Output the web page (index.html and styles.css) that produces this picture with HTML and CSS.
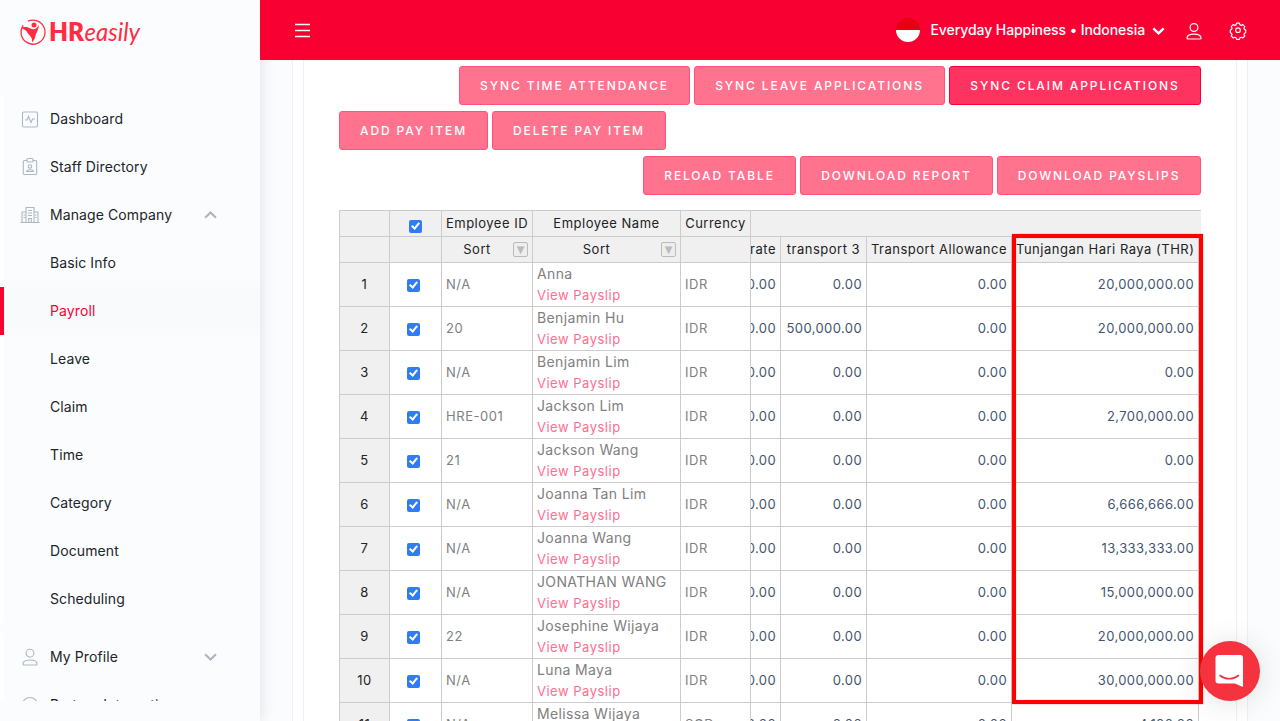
FILE: index.html
```html
<!DOCTYPE html>
<html lang="en">
<head>
<meta charset="utf-8">
<title>HReasily – Payroll</title>
<link rel="stylesheet" href="styles.css">
</head>
<body>
<div class="app">
  <aside class="sidebar">
    <div class="brand">
      <svg width="124" height="34" viewBox="0 0 124 34">
        <path d="M8 5.200A12 12 0 0 1 16.500 4.700A12 12 0 1 1 3.200 9.300" fill="none" stroke="#ff2d42" stroke-width="1.300"/>
        <circle cx="14" cy="9" r="2.500" fill="#ff2d42"/>
        <path d="M.8 12.500c3.500-2.500 7-1.500 9.700 0 3.500 1.500 6 .5 8.500-3.500-.3 4.500-2 6.500-3 9-1 2.500-.5 5-4 8.500.4-4-.4-5-2.700-7.500C7 16.500 5.500 12.500.8 12.500z" fill="#ff2d42"/>
        <text class="logo-bold" x="29" y="25" textLength="35" lengthAdjust="spacingAndGlyphs">HR</text>
        <text class="logo-light" x="64.500" y="25" textLength="55.500" lengthAdjust="spacingAndGlyphs">easily</text>
      </svg>
    </div>
    <nav class="menu">
      <a class="item"><svg class="icon" viewBox="0 0 20 20"><rect x="2.500" y="3" width="15" height="15" rx="1.500"/><path d="M5 11h2L8.500 7.500l2.500 6 1.700-3.500H15"/></svg><span>Dashboard</span></a>
      <a class="item"><svg class="icon" viewBox="0 0 20 20"><path d="M7 3.500H4.500a1.200 1.200 0 0 0-1.200 1.200v11.600a1.200 1.200 0 0 0 1.200 1.200h11a1.200 1.200 0 0 0 1.200-1.200V4.700a1.200 1.200 0 0 0-1.200-1.200H13M7 3a1 1 0 0 1 1-1.500h4A1 1 0 0 1 13 3v1a1 1 0 0 1-1 1H8a1 1 0 0 1-1-1z"/><circle cx="10" cy="9.500" r="1.700"/><path d="M6.500 14.500c.5-2.300 6.500-2.300 7 0z"/></svg><span>Staff Directory</span></a>
      <a class="item"><svg class="icon" viewBox="0 0 20 20"><path d="M.5 17.500h19M6 17V2.500h8V17M6 7H2v10M14 7h4v10M8 5.500h4M8 8h4M8 10.500h4M3.500 10H5M3.500 12.500H5M15 10h1.500M15 12.500h1.500M8.700 17v-3.500h2.600V17"/></svg><span class="grow">Manage Company</span><svg class="caret" viewBox="0 0 12 12"><path d="M1 8 6 3.200 11 8"/></svg></a>
      <a class="item"><span>Basic Info</span></a>
      <a class="item active"><span>Payroll</span></a>
      <a class="item"><span>Leave</span></a>
      <a class="item"><span>Claim</span></a>
      <a class="item"><span>Time</span></a>
      <a class="item"><span>Category</span></a>
      <a class="item"><span>Document</span></a>
      <a class="item"><span>Scheduling</span></a>
      <a class="item group"><svg class="icon" viewBox="0 0 20 20"><circle cx="10" cy="6.200" r="3.900"/><path d="M3 17c0-5.300 14-5.300 14 0 0 .6-.4 1-1 1H4c-.6 0-1-.4-1-1z"/></svg><span class="grow">My Profile</span><svg class="caret" viewBox="0 0 12 12"><path d="M1 3 6 7.800 11 3"/></svg></a>
      <a class="item"><svg class="icon" viewBox="0 0 20 20"><circle cx="10" cy="10" r="7.500"/></svg><span>Partner Integration</span></a>
    </nav>
  </aside>
  <div class="page">
    <header class="topbar">
      <svg class="burger" viewBox="0 0 17 17"><path d="M1 2.500h15M1 8.500h15M1 14.500h15"/></svg>
      <div class="account">
        <span class="flag"></span>
        <span class="company">Everyday Happiness • Indonesia</span>
        <svg class="chevron" viewBox="0 0 12 12"><path d="M1.200 4 6 8.700 10.800 4"/></svg>
      </div>
      <svg class="top-icon" viewBox="0 0 20 20"><circle cx="10" cy="7.500" r="3.900"/><path d="M3 18c0-5.300 14-5.300 14 0 0 .6-.4 1-1 1H4c-.6 0-1-.4-1-1z"/></svg>
      <svg class="top-icon" viewBox="0 0 20 20"><circle cx="10" cy="10.200" r="2.300"/><path d="M8.600 3.200h2.800l.6 1.700 1.200.5 1.600-.8 2 2-.8 1.600.5 1.200 1.200.6v2.600l-1.200.8-.5 1.200.8 1.400-2 2-1.600-.7-1.200.5-.6 1.600H8.600L8 17.800l-1.200-.5-1.600.7-2-2 .8-1.400-.5-1.200-1.200-.8V10l1.200-.6.5-1.200-.8-1.600 2-2 1.600.8L8 4.900z" stroke-linejoin="round"/></svg>
    </header>
    <main class="outer">
      <section class="card">
        <div class="actions end">
          <button class="btn w231">SYNC TIME ATTENDANCE</button>
          <button class="btn w251">SYNC LEAVE APPLICATIONS</button>
          <button class="btn w252 strong">SYNC CLAIM APPLICATIONS</button>
        </div>
        <div class="actions">
          <button class="btn w149">ADD PAY ITEM</button>
          <button class="btn w174">DELETE PAY ITEM</button>
        </div>
        <div class="actions end">
          <button class="btn w153">RELOAD TABLE</button>
          <button class="btn w193">DOWNLOAD REPORT</button>
          <button class="btn w204">DOWNLOAD PAYSLIPS</button>
        </div>
        <div class="sheet">
          <div class="row head first"><i></i><i class="check"><b class="box"></b></i><i>Employee ID</i><i>Employee Name</i><i>Currency</i><i class="span"></i></div>
          <div class="row head"><i></i><i></i><i class="sort">Sort<u>▼</u></i><i class="sort">Sort<u>▼</u></i><i></i><i class="cut">rate</i><i>transport 3</i><i>Transport Allowance</i><i class="thr">Tunjangan Hari Raya (THR)</i></div>
          <div class="row"><i class="no">1</i><i class="check"><b class="box"></b></i><i>N/A</i><i class="name">Anna<a>View Payslip</a></i><i>IDR</i><i class="num cut">0.00</i><i class="num">0.00</i><i class="num">0.00</i><i class="num">20,000,000.00</i></div>
          <div class="row"><i class="no">2</i><i class="check"><b class="box"></b></i><i>20</i><i class="name">Benjamin Hu<a>View Payslip</a></i><i>IDR</i><i class="num cut">0.00</i><i class="num">500,000.00</i><i class="num">0.00</i><i class="num">20,000,000.00</i></div>
          <div class="row"><i class="no">3</i><i class="check"><b class="box"></b></i><i>N/A</i><i class="name">Benjamin Lim<a>View Payslip</a></i><i>IDR</i><i class="num cut">0.00</i><i class="num">0.00</i><i class="num">0.00</i><i class="num">0.00</i></div>
          <div class="row"><i class="no">4</i><i class="check"><b class="box"></b></i><i>HRE-001</i><i class="name">Jackson Lim<a>View Payslip</a></i><i>IDR</i><i class="num cut">0.00</i><i class="num">0.00</i><i class="num">0.00</i><i class="num">2,700,000.00</i></div>
          <div class="row"><i class="no">5</i><i class="check"><b class="box"></b></i><i>21</i><i class="name">Jackson Wang<a>View Payslip</a></i><i>IDR</i><i class="num cut">0.00</i><i class="num">0.00</i><i class="num">0.00</i><i class="num">0.00</i></div>
          <div class="row"><i class="no">6</i><i class="check"><b class="box"></b></i><i>N/A</i><i class="name">Joanna Tan Lim<a>View Payslip</a></i><i>IDR</i><i class="num cut">0.00</i><i class="num">0.00</i><i class="num">0.00</i><i class="num">6,666,666.00</i></div>
          <div class="row"><i class="no">7</i><i class="check"><b class="box"></b></i><i>N/A</i><i class="name">Joanna Wang<a>View Payslip</a></i><i>IDR</i><i class="num cut">0.00</i><i class="num">0.00</i><i class="num">0.00</i><i class="num">13,333,333.00</i></div>
          <div class="row"><i class="no">8</i><i class="check"><b class="box"></b></i><i>N/A</i><i class="name">JONATHAN WANG<a>View Payslip</a></i><i>IDR</i><i class="num cut">0.00</i><i class="num">0.00</i><i class="num">0.00</i><i class="num">15,000,000.00</i></div>
          <div class="row"><i class="no">9</i><i class="check"><b class="box"></b></i><i>22</i><i class="name">Josephine Wijaya<a>View Payslip</a></i><i>IDR</i><i class="num cut">0.00</i><i class="num">0.00</i><i class="num">0.00</i><i class="num">20,000,000.00</i></div>
          <div class="row"><i class="no">10</i><i class="check"><b class="box"></b></i><i>N/A</i><i class="name">Luna Maya<a>View Payslip</a></i><i>IDR</i><i class="num cut">0.00</i><i class="num">0.00</i><i class="num">0.00</i><i class="num">30,000,000.00</i></div>
          <div class="row"><i class="no">11</i><i class="check"><b class="box"></b></i><i>N/A</i><i class="name">Melissa Wijaya<a>View Payslip</a></i><i>SGD</i><i class="num cut">0.00</i><i class="num">0.00</i><i class="num">0.00</i><i class="num">4,100.00</i></div>
        </div>
      </section>
    </main>
  </div>
  <div class="highlight"></div>
  <div class="chat"><svg width="30" height="34" viewBox="0 0 30 34"><path d="M3.500 1h22A2.500 2.500 0 0 1 28 3.500V33l-8-3.500H3.500A3 3 0 0 1 .5 26.500V4A3 3 0 0 1 3.500 1z" fill="#fff"/><path d="M5 21.500c5.500 4.300 13 4.300 18.500 0" fill="none" stroke="#f5333f" stroke-width="1.600" stroke-linecap="round"/></svg></div>
</div>
</body>
</html>
```
FILE: styles.css
```css
* { box-sizing: border-box; }
body { margin: 0; font-family: Inter, "Liberation Sans", sans-serif; background: #fbfcfe; }
.app { position: relative; display: flex; width: 1280px; height: 721px; overflow: hidden; }

/* Sidebar */
.sidebar { width: 260px; height: 721px; background: #fbfcfe; box-shadow: 0 0 14px rgba(60, 60, 90, .16); position: relative; z-index: 1; flex: none; }
.brand { height: 95px; padding: 16px 0 0 20px; }
.brand svg { display: block; overflow: visible; }
.logo-bold { font: 800 26px Lato, sans-serif; fill: #ff2d42; }
.logo-light { font: italic 400 25px Lato, sans-serif; fill: #ff2d42; }
.menu { height: 606px; overflow: hidden; }
.item { display: flex; align-items: center; height: 48px; padding-left: 46px; border-left: 4px solid #fff; font-size: 14px; letter-spacing: .1px; color: #212529; }
.item span { padding-bottom: 2px; }
.item.active { color: #f90033; border-left-color: #f90033; background: #f9fafc; }
.item.group { margin-top: 10px; }
.icon { width: 20px; height: 20px; margin: 0 10px 0 -30px; fill: none; stroke: #adb7c1; stroke-width: 1.1; }
.grow { flex: 1; }
.caret { width: 13px; height: 13px; margin-right: 43px; fill: none; stroke: #adb5bd; stroke-width: 2; }

/* Top bar */
.page { width: 1020px; height: 721px; }
.topbar { position: relative; z-index: 2; display: flex; align-items: center; height: 60px; padding: 0 32px 0 34px; background: #f90033; }
.burger { width: 17px; height: 17px; fill: none; stroke: #fff; stroke-width: 1.3; }
.account { display: flex; align-items: center; margin-left: auto; }
.flag { width: 24px; height: 24px; border-radius: 50%; background: linear-gradient(#e70011 50%, #fff 50%); }
.company { margin-left: 10px; padding-bottom: 1px; color: #fff; font-size: 14px; font-weight: 500; letter-spacing: -.08px; white-space: nowrap; }
.chevron { width: 13px; height: 13px; margin: 0 19px 0 7px; fill: none; stroke: #fff; stroke-width: 2.2; }
.top-icon { width: 20px; height: 20px; fill: none; stroke: #fff; stroke-width: 1.2; }
.top-icon + .top-icon { margin-left: 24px; }

/* Content */
.outer { width: 956px; height: 661px; margin-left: 32px; padding: 0 10px; background: #fff; border: solid #eff0f6; border-width: 0 1px; }
.card { height: 661px; padding: 6px 35px 0; border: solid #f0f0f5; border-width: 0 1px; background: #fff; overflow: hidden; }
.actions { display: flex; gap: 4px; height: 39px; margin-bottom: 6px; }
.actions.end { justify-content: flex-end; }
.btn { flex: none; padding: 0; border: 1px solid #ff5479; border-radius: 3px; background: #ff738f; color: #fff; font: 500 12px Inter, sans-serif; letter-spacing: 1.9px; white-space: nowrap; }
.btn.strong { background: #ff3360; border-color: #f90033; }
.w231 { width: 231px; } .w251 { width: 251px; } .w252 { width: 252px; }
.w149 { width: 149px; } .w174 { width: 174px; }
.w153 { width: 153px; } .w193 { width: 193px; } .w204 { width: 204px; }

/* Spreadsheet */
.sheet { width: 862px; margin-top: 15px; overflow: hidden; border-left: 1px solid #ccc; border-top: 1px solid #ccc; font-size: 13px; letter-spacing: .55px; color: #808080; }
.row { display: grid; grid-template-columns: 50px 52px 91px 148px 70px 30px 86px 145px 187px; height: 44px; }
.row i { display: flex; align-items: center; min-width: 0; padding: 0 4px 1px; border: solid #ccc; border-width: 0 1px 1px 0; font-style: normal; white-space: nowrap; overflow: hidden; }
.row.head { height: 26px; color: #222; background: #f0f0f0; letter-spacing: .5px; }
.row.head i { justify-content: center; }
.row .span { grid-column: 6 / 10; width: 451px; border-right: 0; }
.row .no { justify-content: center; background: #f0f0f0; color: #222; }
.row .num { justify-content: flex-end; color: #3f5570; letter-spacing: .4px; }
.row .cut, .row.head .cut { justify-content: flex-end; }
.row.head .thr { justify-content: flex-start; }
.row .check { padding: 2px 0 0 17px; justify-content: flex-start; }
.row.head .check { padding: 6px 0 0 19px; justify-content: flex-start; }
.box { width: 13px; height: 13px; border-radius: 2px; background: #2f7cf6; display: flex; justify-content: center; }
.box::after { content: ""; width: 3px; height: 6px; margin-top: 1px; border: solid #fff; border-width: 0 2px 2px 0; transform: rotate(40deg); box-sizing: content-box; }
.row .name { flex-direction: column; align-items: flex-start; justify-content: flex-start; font-size: 14px; line-height: 22px; letter-spacing: .36px; }
.name a { font-size: 13px; line-height: 21px; color: #ff6e8f; letter-spacing: .5px; }
.row.head .sort { justify-content: space-between; padding-right: 4px; }
.row.head .sort::before { content: ""; width: 0; margin-left: -5px; }
.sort u { width: 15px; height: 15px; margin-top: 1px; border: 1px solid #bbb; border-radius: 2px; background: #eee; color: #bbb; font: 10px/13px "DejaVu Sans", sans-serif; letter-spacing: 0; text-align: center; text-decoration: none; }

/* Overlays */
.highlight { position: absolute; z-index: 3; left: 1012px; top: 234px; width: 191px; height: 470px; border: 4px solid #f00; box-shadow: 0 0 1px #ff5a30, inset 0 0 1px #ff5a30; }
.chat { position: absolute; z-index: 4; left: 1200px; top: 641px; width: 60px; height: 60px; display: flex; align-items: center; justify-content: center; border-radius: 50%; background: #f5333f; box-shadow: 0 2px 30px rgba(0, 0, 0, .12); }
```
